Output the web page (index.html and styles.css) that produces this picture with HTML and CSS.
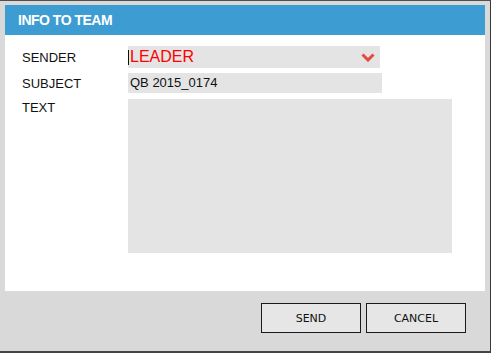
FILE: index.html
```html
<!DOCTYPE html>
<html lang="en">
<head>
    <meta charset="UTF-8">
    <meta name="viewport" content="width=device-width, initial-scale=1.0">
    <title>Info to Team</title>
    <link rel="stylesheet" href="styles.css">
</head>
<body>

<div class="dialog">
    <div class="panel">
        <div class="panel-head">INFO TO TEAM</div>
        <form class="panel-body">
            <label class="field-label center">SENDER</label>
            <div class="field sender">
                <span class="caret"></span>
                <span class="sender-value">LEADER</span>
                <svg class="chevron" width="14" height="9" viewBox="0 0 14 9">
                    <path d="M1.5 1.5 L7 7 L12.5 1.5" fill="none" stroke="#e6493a" stroke-width="3"/>
                </svg>
            </div>

            <label class="field-label center">SUBJECT</label>
            <div class="field subject">QB 2015_0174</div>

            <label class="field-label">TEXT</label>
            <div class="field message"></div>
        </form>
    </div>

    <div class="actions">
        <button type="button" class="btn">SEND</button>
        <button type="button" class="btn">CANCEL</button>
    </div>
</div>

</body>
</html>
```

FILE: styles.css
```css
body {
    margin: 0;
    font-family: "Liberation Sans", Arial, sans-serif;
    background: #d9d9d9;
}
.dialog {
    width: 485px;
    height: 346px;
    padding: 4px 0 0 5px;
    background: #d9d9d9;
    border-top: 1px solid #505050;
    border-right: 1px solid #3a3a3a;
    border-bottom: 2px solid #454545;
}
.panel {
    width: 480px;
    background: #fff;
}
.panel-head {
    height: 30px;
    line-height: 30px;
    padding-left: 13px;
    background: #3d9dd3;
    color: #fff;
    font-weight: bold;
    font-size: 14px;
    letter-spacing: -0.5px;
}
.panel-body {
    display: grid;
    grid-template-columns: 106px auto;
    grid-template-rows: 22px 20px 155px;
    row-gap: 5px;
    padding: 11px 0 38px 17px;
    align-items: start;
}
.field-label {
    font-size: 13px;
    line-height: 15px;
    color: #111;
    padding-top: 2px;
}
.field-label.center {
    align-self: center;
    padding-top: 0;
}
.field {
    background: #e4e4e4;
    color: #111;
    font-size: 13px;
    box-sizing: border-box;
}
.sender {
    width: 252px;
    height: 22px;
    display: flex;
    align-items: center;
    color: #f00;
}
.caret {
    width: 1px;
    height: 15px;
    background: #111;
    margin-right: 1px;
}
.sender-value {
    font-size: 16px;
    flex: 1;
}
.chevron {
    margin-right: 5px;
}
.subject {
    width: 254px;
    height: 20px;
    line-height: 20px;
    padding-left: 2px;
}
.message {
    width: 324px;
    height: 154px;
    margin-top: 1px;
}
.actions {
    display: flex;
    justify-content: flex-end;
    gap: 5px;
    padding: 12px 24px 0 0;
}
.btn {
    width: 100px;
    height: 30px;
    background: #e6e6e6;
    border: 1px solid #1a1a1a;
    border-radius: 0;
    font-family: "DejaVu Sans", sans-serif;
    font-size: 11px;
    color: #111;
    padding: 0;
}
```
